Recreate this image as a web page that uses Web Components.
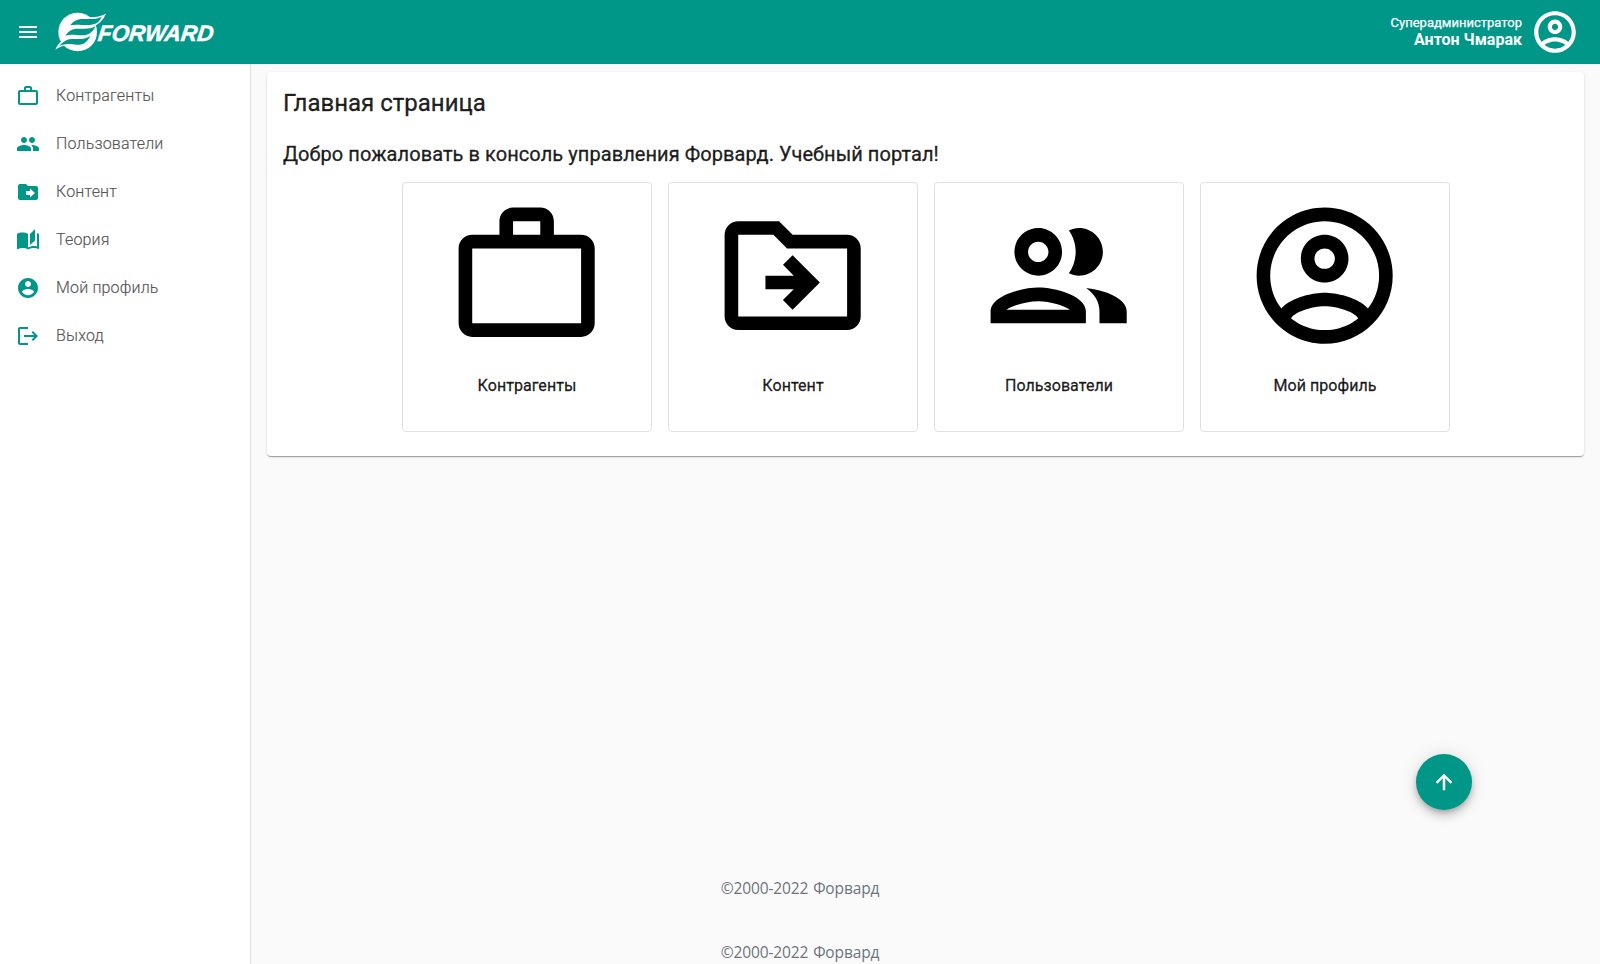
<!DOCTYPE html>
<html lang="ru">
<head>
<meta charset="utf-8">
<title>Форвард. Учебный портал</title>
<style>
  html, body { margin: 0; height: 100%; overflow: hidden; }
  body { background: #fafafa; font-family: Roboto, "Liberation Sans", sans-serif; }
</style>
</head>
<body>
<fw-app></fw-app>
<script>
const ICONS = {
  menu: 'M3 18h18v-2H3v2zm0-5h18v-2H3v2zm0-7v2h18V6H3z',
  work: 'M14 6V4h-4v2h4zM4 8v11h16V8H4zm16-2c1.1 0 2 .9 2 2v11c0 1.1-.9 2-2 2H4c-1.1 0-2-.9-2-2V8c0-1.1.9-2 2-2h4V4c0-1.1.9-2 2-2h4c1.1 0 2 .9 2 2v2h4z',
  group: 'M16 11c1.66 0 2.99-1.34 2.99-3S17.66 5 16 5s-3 1.34-3 3 1.34 3 3 3zm-8 0c1.66 0 2.99-1.34 2.99-3S9.66 5 8 5 5 6.34 5 8s1.34 3 3 3zm0 2c-2.33 0-7 1.17-7 3.5V19h14v-2.5c0-2.33-4.67-3.5-7-3.5zm8 0c-.29 0-.62.02-.97.05 1.16.84 1.97 1.97 1.97 3.45V19h6v-2.5c0-2.33-4.67-3.5-7-3.5z',
  folder: 'M20 6h-8l-2-2H4c-1.1 0-2 .9-2 2v12c0 1.1.9 2 2 2h16c1.1 0 2-.9 2-2V8c0-1.1-.9-2-2-2zm-6 11.5V15h-4v-4h4V8.500l5 4.500-5 4.500z',
  stories: 'M19 1l-5 5v11l5-4.5V1zM1 6v14.65c0 .25.25.5.5.5.1 0 .15-.05.25-.05C3.1 20.45 5.05 20 6.5 20c1.95 0 4.05.4 5.5 1.5V6c-1.45-1.1-3.55-1.5-5.5-1.5S2.45 4.9 1 6zm22 13.5V6c-.6-.45-1.25-.75-2-1v13.5c-1.1-.35-2.3-.5-3.5-.5-1.7 0-4.15.65-5.5 1.5v2c1.35-.85 3.8-1.5 5.5-1.5 1.65 0 3.35.3 4.75 1.05.1.05.15.05.25.05.25 0 .5-.25.5-.5v-1.1z',
  account: 'M12 2C6.48 2 2 6.48 2 12s4.48 10 10 10 10-4.48 10-10S17.52 2 12 2zm0 3c1.66 0 3 1.34 3 3s-1.34 3-3 3-3-1.34-3-3 1.34-3 3-3zm0 14.2c-2.5 0-4.71-1.28-6-3.22.03-1.99 4-3.08 6-3.08 1.99 0 5.97 1.09 6 3.08-1.29 1.94-3.5 3.22-6 3.22z',
  logout: 'M12 3v2H4v14h8v2H4c-1.1 0-2-.9-2-2V5c0-1.1.9-2 2-2zM17 7l-1.41 1.41L18.17 11H8v2h10.17l-2.58 2.59L17 17l5-5z',
  folderOutline: 'M20 6h-8l-2-2H4c-1.1 0-2 .9-2 2v12c0 1.1.9 2 2 2h16c1.1 0 2-.9 2-2V8c0-1.1-.9-2-2-2zm0 12H4V6h5.17l2 2H20v10zm-7.84-6H8v2h4.16l-1.59 1.59L11.99 17 16 13.01 11.99 9l-1.41 1.41L12.16 12z',
  groupOutline: 'M9 13.75c-2.34 0-7 1.17-7 3.5V19h14v-1.75c0-2.33-4.66-3.5-7-3.5zM4.34 17c.84-.58 2.87-1.25 4.66-1.25s3.82.67 4.66 1.25H4.34zM9 12c1.93 0 3.5-1.57 3.5-3.5S10.93 5 9 5 5.5 6.57 5.5 8.5 7.07 12 9 12zm0-5c.83 0 1.5.67 1.5 1.5S9.83 10 9 10s-1.5-.67-1.5-1.5S8.17 7 9 7zm7.04 6.81c1.16.84 1.96 1.96 1.96 3.44V19h4v-1.75c0-2.02-3.5-3.17-5.96-3.44zM15 12c1.93 0 3.5-1.57 3.5-3.5S16.93 5 15 5c-.54 0-1.04.13-1.5.35.63.89 1 1.98 1 3.15s-.37 2.26-1 3.15c.46.22.96.35 1.5.35z',
  accountOutline: 'M12 2C6.48 2 2 6.48 2 12s4.48 10 10 10 10-4.48 10-10S17.52 2 12 2zM7.07 18.28c.43-.9 3.05-1.78 4.93-1.78s4.51.88 4.93 1.78C15.57 19.36 13.86 20 12 20s-3.57-.64-4.93-1.72zm11.29-1.45c-1.43-1.74-4.9-2.33-6.36-2.33s-4.93.59-6.36 2.33C4.62 15.49 4 13.82 4 12c0-4.41 3.59-8 8-8s8 3.59 8 8c0 1.82-.62 3.49-1.64 4.83zM12 6c-1.94 0-3.5 1.56-3.5 3.5S10.06 13 12 13s3.5-1.56 3.5-3.5S13.94 6 12 6zm0 5c-.83 0-1.5-.67-1.5-1.5S11.17 8 12 8s1.5.67 1.5 1.5S12.83 11 12 11z',
  up: 'M4 12l1.41 1.41L11 7.83V20h2V7.83l5.58 5.59L20 12l-8-8-8 8z'
};

function define(name, html) {
  customElements.define(name, class extends HTMLElement {
    constructor() {
      super();
      const t = document.createElement('template');
      t.innerHTML = html;
      this.attachShadow({ mode: 'open' }).append(t.content.cloneNode(true));
    }
  });
}

customElements.define('fw-icon', class extends HTMLElement {
  connectedCallback() {
    if (this.shadowRoot) return;
    const size = this.getAttribute('size') || 24;
    this.attachShadow({ mode: 'open' }).innerHTML = `
      <style>:host{display:block;flex:none;width:${size}px;height:${size}px} svg{display:block;width:100%;height:100%;fill:currentColor}</style>
      <svg viewBox="0 0 24 24"><path d="${ICONS[this.getAttribute('name')]}"/></svg>`;
  }
});

define('fw-logo', `
  <style>:host{display:block;width:160px;height:44px} svg{display:block;overflow:visible}
  text{font:italic 700 22.5px "Liberation Sans",Arial,sans-serif;fill:#fff;stroke:#fff;stroke-width:.5}</style>
  <svg width="160" height="44" viewBox="0 0 160 44">
    <g transform="translate(-55 -10) scale(.33333)">
      <circle cx="233" cy="96" r="58" fill="#fff"/>
      <path fill="#fff" d="M205 84C216 58 232 51 252 51C282 53 300 50 318 41C309 60 298 74 276 79L240 84Z"/>
      <path fill="#fff" d="M166 149C176 127 190 116 216 115L244 132C208 132 188 135 166 149Z"/>
      <path fill="#009688" d="M211 76C222 60 236 56 256 57C278 58 290 57 305 51C297 69 285 75 262 75C240 75 226 72 211 76Z"/>
      <path fill="#009688" d="M196 107C207 90 220 85 240 86C256 87 272 87 287 79C276 101 262 107 244 106C225 105 210 102 196 107Z"/>
      <path fill="#009688" d="M178 138C192 120 206 116 226 117C242 118 257 117 271 108C260 130 246 136 229 134C208 131 194 131 178 138Z"/>
    </g>
    <text transform="translate(42.2 31) skewX(-7)" textLength="115.500" lengthAdjust="spacingAndGlyphs">FORWARD</text>
  </svg>`);

define('fw-header', `
  <style>
    :host{display:flex;align-items:center;box-sizing:border-box;height:64px;padding:0 20px 0 16px;background:#009688;color:#fff}
    fw-logo{margin-left:15px}
    .user{margin-left:auto;margin-right:8px;text-align:right;padding-bottom:1px}
    .role{font-size:13px;font-weight:400;line-height:16px;-webkit-text-stroke:.25px}
    .name{font-size:16px;font-weight:700;line-height:18px}
  </style>
  <fw-icon name="menu"></fw-icon>
  <fw-logo></fw-logo>
  <div class="user"><div class="role">Суперадминистратор</div><div class="name">Антон Чмарак</div></div>
  <fw-icon name="accountOutline" size="50"></fw-icon>`);

customElements.define('fw-nav-item', class extends HTMLElement {
  connectedCallback() {
    if (this.shadowRoot) return;
    this.attachShadow({ mode: 'open' }).innerHTML = `
      <style>
        :host{display:flex;align-items:center;gap:16px;height:48px;padding:0 16px;color:#555;font-size:16px;font-weight:300;letter-spacing:.17px}
        fw-icon{color:#009688}
        span{padding-bottom:2px;-webkit-text-stroke:.15px}
      </style>
      <fw-icon name="${this.getAttribute('icon')}"></fw-icon><span><slot></slot></span>`;
  }
});

define('fw-sidebar', `
  <style>:host{display:block;box-sizing:border-box;background:#fff;border-right:1px solid #e0e0e0;padding-top:8px}</style>
  <nav>
    <fw-nav-item icon="work">Контрагенты</fw-nav-item>
    <fw-nav-item icon="group">Пользователи</fw-nav-item>
    <fw-nav-item icon="folder">Контент</fw-nav-item>
    <fw-nav-item icon="stories">Теория</fw-nav-item>
    <fw-nav-item icon="account">Мой профиль</fw-nav-item>
    <fw-nav-item icon="logout">Выход</fw-nav-item>
  </nav>`);

customElements.define('fw-tile', class extends HTMLElement {
  connectedCallback() {
    if (this.shadowRoot) return;
    this.attachShadow({ mode: 'open' }).innerHTML = `
      <style>
        :host{display:flex;flex-direction:column;align-items:center;box-sizing:border-box;width:250px;height:250px;padding-top:11px;border:1px solid #e0e0e0;border-radius:4px;background:#fff}
        fw-icon{color:#000}
        span{margin-top:16.8px;font-size:16px;font-weight:400;line-height:24px;letter-spacing:.06px;-webkit-text-stroke:.3px}
      </style>
      <fw-icon name="${this.getAttribute('icon')}" size="163.33"></fw-icon><span><slot></slot></span>`;
  }
});

define('fw-panel', `
  <style>
    :host{display:block;box-sizing:border-box;height:384px;padding:16px;background:#fff;border-radius:4px;color:rgba(0,0,0,.87);
      box-shadow:0 2px 1px -1px rgba(0,0,0,.2),0 1px 1px rgba(0,0,0,.14),0 1px 3px rgba(0,0,0,.12)}
    h1,h2{font-weight:400;-webkit-text-stroke:.35px}
    h1{margin:0;font-size:24px;line-height:30px}
    h2{margin:20px 0 12px;font-size:20px;line-height:32px;letter-spacing:.065px}
    .tiles{display:flex;justify-content:center;gap:16px;padding-left:1px}
  </style>
  <h1>Главная страница</h1>
  <h2>Добро пожаловать в консоль управления Форвард. Учебный портал!</h2>
  <div class="tiles">
    <fw-tile icon="work">Контрагенты</fw-tile>
    <fw-tile icon="folderOutline">Контент</fw-tile>
    <fw-tile icon="groupOutline">Пользователи</fw-tile>
    <fw-tile icon="accountOutline">Мой профиль</fw-tile>
  </div>`);

define('fw-footer', `
  <style>:host{display:flex;align-items:center;justify-content:center;height:64px;color:#6c757d;font:15.5px "Open Sans","Noto Sans",sans-serif;letter-spacing:-.12px;word-spacing:1px}</style>
  <span><slot></slot></span>`);

define('fw-fab', `
  <style>:host{display:flex;align-items:center;justify-content:center;width:56px;height:56px;border-radius:50%;background:#009688;color:#fff;
    box-shadow:0 3px 5px -1px rgba(0,0,0,.2),0 6px 10px rgba(0,0,0,.14),0 1px 18px rgba(0,0,0,.12)}
    fw-icon{stroke:#fff;stroke-width:.5}</style>
  <fw-icon name="up"></fw-icon>`);

define('fw-app', `
  <style>
    :host{display:grid;position:relative;grid-template-columns:251px 1fr;grid-template-rows:64px 792px 64px 64px;height:100vh;overflow:hidden}
    fw-header{grid-column:1/-1}
    fw-sidebar{grid-column:1;grid-row:2/-1;z-index:1}
    main{grid-column:2;grid-row:2;padding:8px 16px}
    fw-footer{grid-column:1/-1}
    fw-footer:nth-of-type(1){grid-row:3}
    fw-footer:nth-of-type(2){grid-row:4}
    fw-fab{position:absolute;right:128px;bottom:154px}
  </style>
  <fw-header></fw-header>
  <fw-sidebar></fw-sidebar>
  <main><fw-panel></fw-panel></main>
  <fw-footer>©2000-2022 Форвард</fw-footer>
  <fw-footer>©2000-2022 Форвард</fw-footer>
  <fw-fab></fw-fab>`);
</script>
</body>
</html>
